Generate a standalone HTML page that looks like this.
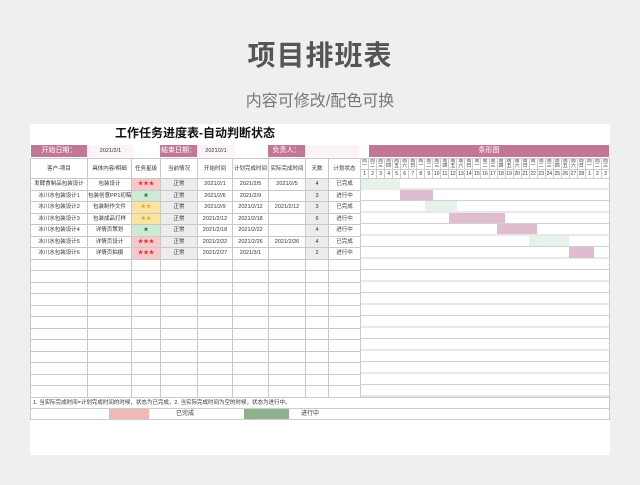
<!DOCTYPE html>
<html><head><meta charset="utf-8"><style>
*{margin:0;padding:0;box-sizing:border-box}
body{width:640px;height:485px;background:#efefef;font-family:"Liberation Sans","Noto Sans CJK SC",sans-serif;position:relative;overflow:hidden;color:#333}
.a{position:absolute}
#sheet{left:30px;top:124px;width:580px;height:331px;background:#fff}
table{border-collapse:collapse;table-layout:fixed;position:absolute}
td{border:1px solid #c8c8c8;font-size:5.5px;text-align:center;white-space:nowrap;overflow:hidden;padding:0;height:11.5px;line-height:10px}
.lbl{background:#c27797;color:#fff;font-size:7px;text-align:center;line-height:12px;height:12px}
.g{background:#ececec}
.r{background:#f8c8cc;color:#d33}
.gr{background:#cdebd3;color:#2a7a3a}
.y{background:#fbe3a2;color:#d8b040}
.day td{height:auto;font-size:5px;line-height:5px;border-color:#ccc}
</style></head><body>
<div class="a" style="left:0;width:640px;top:34px;text-align:center;font-size:28px;font-weight:bold;color:#555;letter-spacing:1px">项目排班表</div>
<div class="a" style="left:0;width:640px;top:87px;text-align:center;font-size:16px;color:#777">内容可修改/配色可换</div>
<div class="a" id="sheet"></div>
<div class="a" style="left:30px;width:330px;top:124px;text-align:center;font-size:12px;font-weight:bold;color:#111">工作任务进度表-自动判断状态</div>
<div class="a lbl" style="left:31px;top:145px;width:56px">开始日期：</div>
<div class="a" style="left:88px;top:145px;width:45px;height:12px;background:#fbf3f6;font-size:5.5px;line-height:12px;text-align:center">2021/2/1</div>
<div class="a lbl" style="left:160px;top:145px;width:37px">结束日期：</div>
<div class="a" style="left:197px;top:145px;width:38px;height:12px;background:#fbf3f6;font-size:5.5px;line-height:12px;text-align:center">2021/2/1</div>
<div class="a lbl" style="left:268px;top:145px;width:37px">负责人：</div>
<div class="a" style="left:305px;top:145px;width:54px;height:12px;background:#fbf3f6"></div>
<div class="a lbl" style="left:369px;top:145px;width:240px">条形图</div>

<table style="left:30px;top:158px;width:330px">
<colgroup><col style="width:57px"><col style="width:44px"><col style="width:29px"><col style="width:37px"><col style="width:35px"><col style="width:36px"><col style="width:37px"><col style="width:23px"><col style="width:32px"></colgroup>
<tr style="height:20px"><td style="height:20px">客户-项目</td><td>具体内容/明细</td><td>任务星级</td><td>当前情况</td><td>开始时间</td><td>计划完成时间</td><td>实际完成时间</td><td>天数</td><td>计划状态</td></tr>
<tr><td>发酵食制品包装设计</td><td>包装设计</td><td class="r">★★★</td><td class="g">正常</td><td>2021/2/1</td><td>2021/2/5</td><td>2021/2/5</td><td class="g">4</td><td>已完成</td></tr>
<tr><td>冰川水包装设计1</td><td>包装创意PP1初稿</td><td class="gr">★</td><td class="g">正常</td><td>2021/2/6</td><td>2021/2/9</td><td></td><td class="g">3</td><td>进行中</td></tr>
<tr><td>冰川水包装设计2</td><td>包装制作文件</td><td class="y">★★</td><td class="g">正常</td><td>2021/2/9</td><td>2021/2/12</td><td>2021/2/12</td><td class="g">3</td><td>已完成</td></tr>
<tr><td>冰川水包装设计3</td><td>包装成品打样</td><td class="y">★★</td><td class="g">正常</td><td>2021/2/12</td><td>2021/2/18</td><td></td><td class="g">6</td><td>进行中</td></tr>
<tr><td>冰川水包装设计4</td><td>详情页策划</td><td class="gr">★</td><td class="g">正常</td><td>2021/2/18</td><td>2021/2/22</td><td></td><td class="g">4</td><td>进行中</td></tr>
<tr><td>冰川水包装设计5</td><td>详情页设计</td><td class="r">★★★</td><td class="g">正常</td><td>2021/2/22</td><td>2021/2/26</td><td>2021/2/26</td><td class="g">4</td><td>已完成</td></tr>
<tr><td>冰川水包装设计6</td><td>详情页拍摄</td><td class="r">★★★</td><td class="g">正常</td><td>2021/2/27</td><td>2021/3/1</td><td></td><td class="g">2</td><td>进行中</td></tr>
<tr><td></td><td></td><td></td><td></td><td></td><td></td><td></td><td></td><td></td></tr>
<tr><td></td><td></td><td></td><td></td><td></td><td></td><td></td><td></td><td></td></tr>
<tr><td></td><td></td><td></td><td></td><td></td><td></td><td></td><td></td><td></td></tr>
<tr><td></td><td></td><td></td><td></td><td></td><td></td><td></td><td></td><td></td></tr>
<tr><td></td><td></td><td></td><td></td><td></td><td></td><td></td><td></td><td></td></tr>
<tr><td></td><td></td><td></td><td></td><td></td><td></td><td></td><td></td><td></td></tr>
<tr><td></td><td></td><td></td><td></td><td></td><td></td><td></td><td></td><td></td></tr>
<tr><td></td><td></td><td></td><td></td><td></td><td></td><td></td><td></td><td></td></tr>
<tr><td></td><td></td><td></td><td></td><td></td><td></td><td></td><td></td><td></td></tr>
<tr><td></td><td></td><td></td><td></td><td></td><td></td><td></td><td></td><td></td></tr>
<tr><td></td><td></td><td></td><td></td><td></td><td></td><td></td><td></td><td></td></tr>
<tr><td></td><td></td><td></td><td></td><td></td><td></td><td></td><td></td><td></td></tr>
</table>

<!-- gantt grid -->
<div class="a" style="left:360px;top:178px;width:250px;height:219px;border-left:1px solid #ccc;border-right:1px solid #ccc;background:repeating-linear-gradient(to bottom,transparent 0,transparent 10.5px,#d0d0d0 10.5px,#d0d0d0 11.5px)"></div>
<div class="a" style="left:361px;top:178px;width:39px;height:11px;background:#e6f1ea"></div>
<div class="a" style="left:400px;top:190px;width:33px;height:10px;background:#dfbdcf"></div>
<div class="a" style="left:425px;top:201px;width:32px;height:10px;background:#e6f1ea"></div>
<div class="a" style="left:449px;top:213px;width:56px;height:10px;background:#dfbdcf"></div>
<div class="a" style="left:497px;top:224px;width:40px;height:10px;background:#dfbdcf"></div>
<div class="a" style="left:529px;top:236px;width:40px;height:10px;background:#e6f1ea"></div>
<div class="a" style="left:569px;top:247px;width:25px;height:11px;background:#dfbdcf"></div>

<table class="day" style="left:360px;top:158px;width:250px">
<tr style="height:11px"><td>周<br>一</td><td>周<br>二</td><td>周<br>三</td><td>周<br>四</td><td>周<br>五</td><td>周<br>六</td><td>周<br>日</td><td>周<br>一</td><td>周<br>二</td><td>周<br>三</td><td>周<br>四</td><td>周<br>五</td><td>周<br>六</td><td>周<br>日</td><td>周<br>一</td><td>周<br>二</td><td>周<br>三</td><td>周<br>四</td><td>周<br>五</td><td>周<br>六</td><td>周<br>日</td><td>周<br>一</td><td>周<br>二</td><td>周<br>三</td><td>周<br>四</td><td>周<br>五</td><td>周<br>六</td><td>周<br>日</td><td>周<br>一</td><td>周<br>二</td><td>周<br>三</td></tr>
<tr style="height:9px"><td style="line-height:8px">1</td><td>2</td><td>3</td><td>4</td><td>5</td><td>6</td><td>7</td><td>8</td><td>9</td><td>10</td><td>11</td><td>12</td><td>13</td><td>14</td><td>15</td><td>16</td><td>17</td><td>18</td><td>19</td><td>20</td><td>21</td><td>22</td><td>23</td><td>24</td><td>25</td><td>26</td><td>27</td><td>28</td><td>1</td><td>2</td><td>3</td></tr>
</table>

<div class="a" style="left:30px;top:397px;width:580px;height:12px;border:1px solid #ccc;font-size:5.5px;line-height:10px;padding-left:2px">1. 当实际完成时间=计划完成时间的时候，状态为已完成，2. 当实际完成时间为空的时候，状态为进行中。</div>
<div class="a" style="left:30px;top:408px;width:580px;height:12px;border:1px solid #ccc"></div>
<div class="a" style="left:109px;top:409px;width:40px;height:10px;background:#ecbcb4"></div>
<div class="a" style="left:150px;top:409px;width:70px;font-size:6px;line-height:10px;text-align:center">已完成</div>
<div class="a" style="left:244px;top:409px;width:45px;height:10px;background:#8fb18d"></div>
<div class="a" style="left:290px;top:409px;width:40px;font-size:6px;line-height:10px;text-align:center">进行中</div>
</body></html>
